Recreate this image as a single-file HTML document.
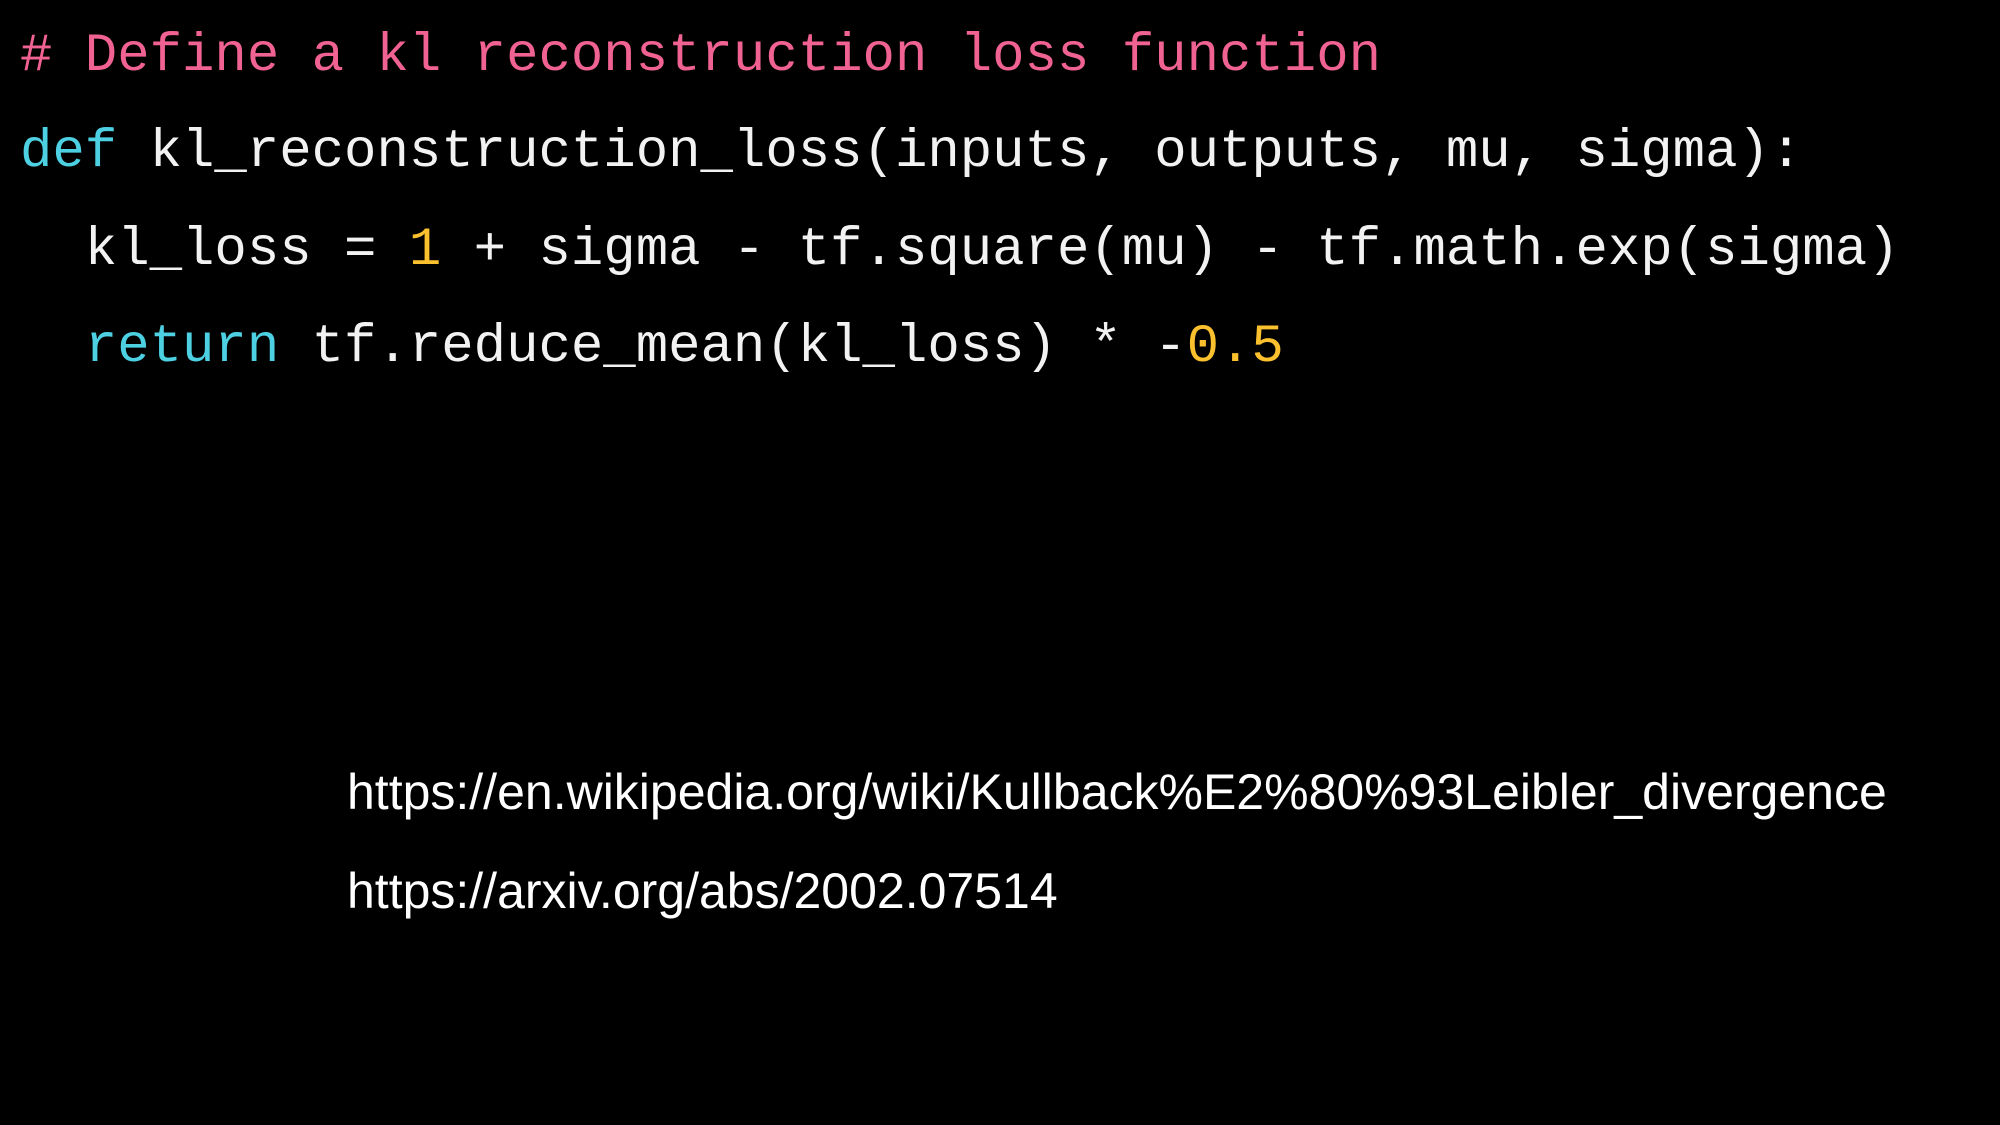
<!DOCTYPE html>
<html><head><meta charset="utf-8"><style>
html,body{margin:0;padding:0;background:#000;width:2000px;height:1125px;overflow:hidden;position:relative}
.c{position:absolute;left:20px;font-family:"Liberation Mono",monospace;font-size:54px;line-height:54px;white-space:pre;color:#f2f2f2}
.p{color:#f06292}.b{color:#4dd0e1}.y{color:#fbc02d}
.l{position:absolute;left:347px;font-family:"Liberation Sans",Arial,sans-serif;font-size:50px;line-height:50px;color:#fff;white-space:pre}
</style></head><body>
<div class="c p" style="top:30px"># Define a kl reconstruction loss function</div>
<div class="c" style="top:126px"><span class="b">def</span> kl_reconstruction_loss(inputs, outputs, mu, sigma):</div>
<div class="c" style="top:224px">  kl_loss = <span class="y">1</span> + sigma - tf.square(mu) - tf.math.exp(sigma)</div>
<div class="c" style="top:321px">  <span class="b">return</span> tf.reduce_mean(kl_loss) * -<span class="y">0.5</span></div>
<div class="l" style="top:767px">https://en.wikipedia.org/wiki/Kullback%E2%80%93Leibler_divergence</div>
<div class="l" style="top:866px">https://arxiv.org/abs/2002.07514</div>
</body></html>
